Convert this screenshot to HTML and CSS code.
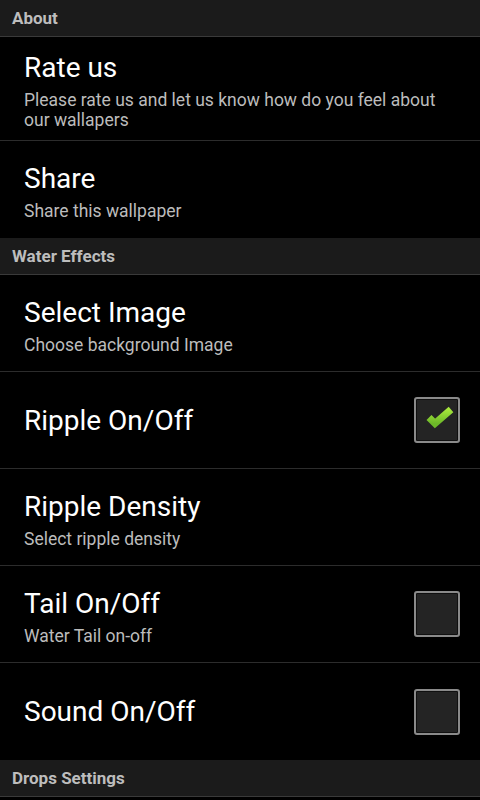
FILE: index.html
```html
<!DOCTYPE html>
<html lang="en">
<head>
    <meta charset="UTF-8">
    <meta name="viewport" content="width=device-width, initial-scale=1.0">
    <title>Settings</title>
    <link rel="stylesheet" href="styles.css">
</head>
<body>
    <div class="group-header">About</div>
    <div class="group">
        <div class="pref">
            <div class="pref-text">
                <div class="pref-title">Rate us</div>
                <div class="pref-summary">Please rate us and let us know how do you feel about our wallapers</div>
            </div>
        </div>
        <div class="pref">
            <div class="pref-text">
                <div class="pref-title">Share</div>
                <div class="pref-summary">Share this wallpaper</div>
            </div>
        </div>
    </div>

    <div class="group-header">Water Effects</div>
    <div class="group">
        <div class="pref">
            <div class="pref-text">
                <div class="pref-title">Select Image</div>
                <div class="pref-summary">Choose background Image</div>
            </div>
        </div>
        <div class="pref">
            <div class="pref-text">
                <div class="pref-title">Ripple On/Off</div>
            </div>
            <div class="checkbox checked">
                <svg viewBox="0 0 42 42" width="42" height="42">
                    <defs>
                        <linearGradient id="tick" x1="0" y1="0" x2="0" y2="1">
                            <stop offset="0" stop-color="#a6e63c"/>
                            <stop offset="1" stop-color="#6cb828"/>
                        </linearGradient>
                    </defs>
                    <polyline points="13,18.5 19,24.5 35,10.5" fill="none" stroke="url(#tick)" stroke-width="7" stroke-linejoin="miter"/>
                </svg>
            </div>
        </div>
        <div class="pref">
            <div class="pref-text">
                <div class="pref-title">Ripple Density</div>
                <div class="pref-summary">Select ripple density</div>
            </div>
        </div>
        <div class="pref">
            <div class="pref-text">
                <div class="pref-title">Tail On/Off</div>
                <div class="pref-summary">Water Tail on-off</div>
            </div>
            <div class="checkbox"></div>
        </div>
        <div class="pref">
            <div class="pref-text">
                <div class="pref-title">Sound On/Off</div>
            </div>
            <div class="checkbox"></div>
        </div>
    </div>

    <div class="group-header">Drops Settings</div>
</body>
</html>
```

FILE: styles.css
```css
* {
    margin: 0;
    padding: 0;
    box-sizing: border-box;
}

body {
    font-family: Roboto, 'Noto Sans', sans-serif;
    background: #000;
    color: #fff;
    width: 480px;
    height: 800px;
    overflow: hidden;
}

.group-header {
    height: 37px;
    padding: 1px 12px 0;
    line-height: 35px;
    font-size: 17px;
    font-weight: bold;
    color: #bdbdbd;
    background: #1b1b1b;
    border-bottom: 1px solid #3a3a3a;
}

.pref {
    display: flex;
    align-items: center;
    min-height: 97px;
    padding: 11px 20px 10px 24px;
    border-bottom: 1px solid #2c2c2c;
}

.group .pref:last-child {
    border-bottom: none;
}

.pref-text {
    flex: 1;
    display: flex;
    flex-direction: column;
}

.pref-title {
    font-size: 28px;
    line-height: 40px;
    color: #fff;
}

.pref-summary {
    margin-top: 2px;
    font-size: 17.5px;
    line-height: 20px;
    color: #bcbcbc;
}

.checkbox {
    width: 46px;
    height: 46px;
    flex: none;
    margin-top: -1px;
    border: 2px solid #8a8a8a;
    border-radius: 3px;
    background: #242424;
    box-shadow: inset 0 0 0 1px #101010;
    display: flex;
    align-items: center;
    justify-content: center;
}
```
